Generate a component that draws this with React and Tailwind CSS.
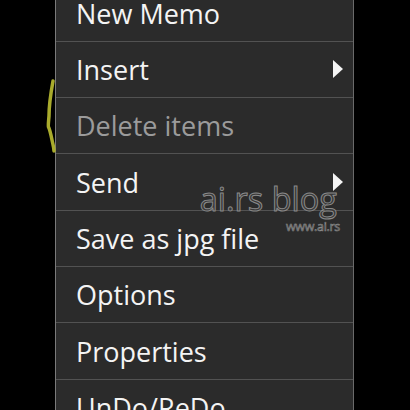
import React from "react";

const items = [
  { label: "New Memo" },
  { label: "Insert", sub: true },
  { label: "Delete items", disabled: true },
  { label: "Send", sub: true },
  { label: "Save as jpg file" },
  { label: "Options" },
  { label: "Properties" },
  { label: "UnDo/ReDo" },
];

const App = () => {
  return (
    <div
      className="relative h-[410px] w-[410px] overflow-hidden bg-black"
      style={{ fontFamily: '"Open Sans", "DejaVu Sans", sans-serif' }}
    >
      {/* Menu */}
      <div className="ml-[55px] -mt-[14.6px] w-[299px] border-x border-l-[#7a7a7a] border-r-[#6a6a6a] bg-[#2b2b2b]">
        {items.map((item) => (
          <div
            key={item.label}
            className="flex h-[56.33px] items-center justify-between border-b border-[#525252] pl-5 pr-[10px]"
          >
            <span
              className={`text-[27px] leading-none ${
                item.disabled ? "text-[#9b9b9b]" : "text-[#f4f4f4]"
              }`}
            >
              {item.label}
            </span>
            {item.sub && (
              <svg width="10" height="18" viewBox="0 0 10 18">
                <path d="M0 0 L10 9 L0 18 Z" fill="#f4f4f4" />
              </svg>
            )}
          </div>
        ))}
      </div>

      {/* Watermark */}
      <div className="pointer-events-none absolute right-[70px] top-[183px] flex flex-col items-end">
        <span className="mr-[3px] text-[32.5px] leading-none text-[#383838] [-webkit-text-stroke:1px_#8a8a8a]">
          ai.rs blog
        </span>
        <span className="mt-[5px] text-[12.5px] leading-none tracking-[-0.3px] text-[#383838] [-webkit-text-stroke:0.6px_#8a8a8a]">
          www.ai.rs
        </span>
      </div>

      {/* Yellow scribble */}
      <svg
        className="pointer-events-none absolute left-0 top-0"
        width="410"
        height="410"
        viewBox="0 0 410 410"
      >
        <path
          d="M53 81 C51 92 49 104 49 116 C48.5 122 48 126 48.5 127 C50 130 51 135 52 140 C53 145 54 148 54 151"
          stroke="#a9ab2c"
          strokeWidth="3.5"
          fill="none"
          strokeLinecap="round"
        />
      </svg>
    </div>
  );
};

export default App;
